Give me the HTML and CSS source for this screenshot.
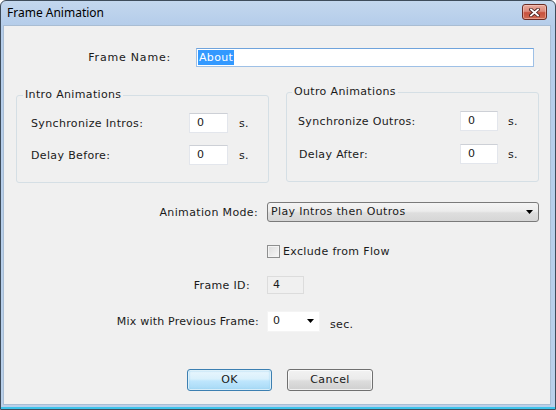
FILE: index.html
```html
<!DOCTYPE html>
<html>
<head>
<meta charset="utf-8">
<title>Frame Animation</title>
<link rel="stylesheet" href="styles.css">
</head>
<body>
<div class="window">
  <div class="titlebar">
    <span class="title">Frame Animation</span>
    <span class="close">
      <svg width="11" height="9" viewBox="0 0 11 9">
        <path d="M2 1.5 L9 7.5 M9 1.5 L2 7.5" stroke="#4a2320" stroke-width="3.6" stroke-linecap="square" fill="none"/>
        <path d="M2 1.5 L9 7.5 M9 1.5 L2 7.5" stroke="#ffffff" stroke-width="1.8" stroke-linecap="square" fill="none"/>
      </svg>
    </span>
  </div>
  <div class="client">
    <div class="row row-name">
      <span class="lbl lbl-name">Frame Name:</span>
      <span class="textbox focused"><span class="sel">About</span></span>
    </div>

    <div class="groups">
      <fieldset class="group intro">
        <legend>Intro Animations</legend>
        <div class="grow">
          <span class="glabel">Synchronize Intros:</span>
          <span class="num">0</span>
          <span class="unit">s.</span>
        </div>
        <div class="grow">
          <span class="glabel">Delay Before:</span>
          <span class="num">0</span>
          <span class="unit">s.</span>
        </div>
      </fieldset>
      <fieldset class="group outro">
        <legend>Outro Animations</legend>
        <div class="grow">
          <span class="glabel">Synchronize Outros:</span>
          <span class="num">0</span>
          <span class="unit">s.</span>
        </div>
        <div class="grow">
          <span class="glabel indent">Delay After:</span>
          <span class="num">0</span>
          <span class="unit">s.</span>
        </div>
      </fieldset>
    </div>

    <div class="row row-mode">
      <span class="lbl lbl-mode">Animation Mode:</span>
      <span class="combo">
        <span>Play Intros then Outros</span>
        <svg width="7" height="4" viewBox="0 0 7 4"><path d="M0 0 H7 L3.5 4 Z" fill="#000"/></svg>
      </span>
    </div>

    <div class="row row-check">
      <span class="checkbox"></span>
      <span class="checklabel">Exclude from Flow</span>
    </div>

    <div class="row row-id">
      <span class="lbl lbl-id">Frame ID:</span>
      <span class="readonly">4</span>
    </div>

    <div class="row row-mix">
      <span class="lbl lbl-mix">Mix with Previous Frame:</span>
      <span class="dropdown">
        <span>0</span>
        <svg width="7" height="4" viewBox="0 0 7 4"><path d="M0 0 H7 L3.5 4 Z" fill="#000"/></svg>
      </span>
      <span class="sec">sec.</span>
    </div>

    <div class="row row-buttons">
      <span class="button default">OK</span>
      <span class="button">Cancel</span>
    </div>
  </div>
</div>
</body>
</html>
```

FILE: styles.css
```css
body {
  margin: 0;
  font-family: "DejaVu Sans", Verdana, sans-serif;
  font-size: 11px;
  letter-spacing: 0.35px;
  color: #1a1a1a;
}

.window {
  width: 556px;
  height: 410px;
  box-sizing: border-box;
  border: 1px solid #3e4c5b;
  border-radius: 6px 6px 0 0;
  background: linear-gradient(#c3d7ee, #b5cdea 24px, #b9d0ea);
  display: flex;
  flex-direction: column;
  box-shadow: inset 0 -2px 0 #3cc3ea;
}

.titlebar {
  height: 24px;
  flex: none;
  display: flex;
  align-items: center;
  justify-content: space-between;
  padding: 0 8px 0 6px;
}

.title {
  font-family: "Noto Sans", "Open Sans", sans-serif;
  font-size: 12px;
  letter-spacing: 0;
  color: #000;
  padding-bottom: 1px;
}

.close {
  align-self: flex-start;
  margin-top: 3px;
  width: 25px;
  height: 16px;
  box-sizing: border-box;
  border: 1px solid #6b2c24;
  border-radius: 3px;
  background: linear-gradient(#e9a99c 0%, #dc8a7c 45%, #c8513e 55%, #cf6a52 100%);
  box-shadow: inset 0 0 0 1px rgba(255, 220, 210, 0.45);
  display: flex;
  align-items: center;
  justify-content: center;
}

.client {
  flex: 1;
  margin: 0 4px 4px 2px;
  background: #f0f0f0;
  border: 1px solid #a9bdd3;
}

.row {
  display: flex;
  align-items: center;
}

.lbl {
  text-align: right;
  flex: none;
}

.row-name {
  margin-top: 22px;
  height: 19px;
}
.lbl-name { width: 167px; letter-spacing: 0.8px; }

.textbox {
  margin-left: 25px;
  width: 338px;
  height: 19px;
  box-sizing: border-box;
  background: #fff;
  border: 1px solid #9ec0e6;
  border-top-color: #6fa3dc;
  display: flex;
  align-items: center;
  padding-left: 1px;
}

.sel {
  background: #3399ff;
  color: #fff;
  line-height: 15px;
  padding: 0 1px;
}

.groups {
  display: flex;
  align-items: flex-start;
  gap: 17px;
  margin-top: 18px;
  margin-left: 12px;
}

.group {
  margin: 0;
  width: 253px;
  box-sizing: border-box;
  border: 1px solid #d5dfe5;
  border-radius: 3px;
  min-inline-size: 0;
  display: flex;
  flex-direction: column;
}

.group legend {
  line-height: 14px;
  padding: 0 2px;
}

.intro {
  margin-top: 3px;
  padding: 11px 14px 17px;
  gap: 12px;
}
.intro legend { margin-left: -8px; }

.outro {
  padding: 12px 11px 17px;
  gap: 13px;
}
.outro legend { margin-left: -6px; }

.grow {
  display: flex;
  align-items: center;
  height: 20px;
}

.glabel { flex: none; }
.intro .glabel { width: 158px; }
.outro .glabel { width: 162px; }
.glabel.indent { padding-left: 1px; width: 161px; }

.num {
  height: 20px;
  box-sizing: border-box;
  background: #fff;
  border: 1px solid #e3e6ec;
  border-top-color: #cdd0d6;
  display: flex;
  align-items: center;
  padding: 0 0 2px 7px;
}
.intro .num { width: 39px; }
.outro .num { width: 38px; }

.unit { margin-left: 11px; }
.outro .unit { margin-left: 10px; }

.row-mode {
  margin-top: 19px;
  height: 20px;
}
.lbl-mode { width: 254px; }

.combo {
  margin-left: 9px;
  width: 272px;
  height: 20px;
  box-sizing: border-box;
  border: 1px solid #7a7a7a;
  border-radius: 3px;
  background: linear-gradient(#f4f4f4 0%, #ececec 45%, #dedede 55%, #d6d6d6 100%);
  display: flex;
  align-items: center;
  justify-content: space-between;
  padding: 0 5px 1px 3px;
}

.row-check {
  margin-top: 23px;
  height: 13px;
}

.checkbox {
  margin-left: 263px;
  width: 13px;
  height: 13px;
  box-sizing: border-box;
  border: 1px solid #8e8f8f;
  background: linear-gradient(135deg, #dcdcdc, #f8f8f8);
  box-shadow: inset 0 0 0 1px #f4f4f4;
}

.checklabel { margin-left: 3px; }

.row-id {
  margin-top: 18px;
  height: 18px;
}
.lbl-id { width: 246px; }

.readonly {
  margin-left: 17px;
  width: 37px;
  height: 18px;
  box-sizing: border-box;
  border: 1px solid #dcdcdc;
  background: #f0f0f0;
  display: flex;
  align-items: center;
  padding: 0 0 1px 5px;
}

.row-mix {
  margin-top: 17px;
  height: 21px;
}
.lbl-mix { width: 255px; letter-spacing: 0.2px; }

.dropdown {
  margin-left: 8px;
  width: 53px;
  height: 21px;
  box-sizing: border-box;
  background: #fff;
  border: 1px solid #f4f4f4;
  display: flex;
  align-items: center;
  justify-content: space-between;
  padding: 0 5px 2px 5px;
}

.sec {
  margin-left: 10px;
  padding-top: 6px;
}

.row-buttons {
  margin-top: 37px;
  margin-left: 183px;
  gap: 15px;
}

.button {
  height: 22px;
  box-sizing: border-box;
  border: 1px solid #707070;
  border-radius: 3px;
  background: linear-gradient(#f2f2f2 0%, #ebebeb 45%, #dddddd 55%, #cfcfcf 100%);
  box-shadow: inset 0 0 0 1px rgba(255, 255, 255, 0.7);
  display: flex;
  align-items: center;
  justify-content: center;
  width: 86px;
  padding-bottom: 1px;
}

.button.default {
  width: 85px;
  border-color: #3c7fb1;
  background: linear-gradient(#eaf6fd 0%, #d9f0fc 45%, #bee6fd 55%, #a7d9f5 100%);
  box-shadow: inset 0 0 0 1px rgba(255, 255, 255, 0.6), inset 0 0 2px 1px #98d1ef;
}
```
